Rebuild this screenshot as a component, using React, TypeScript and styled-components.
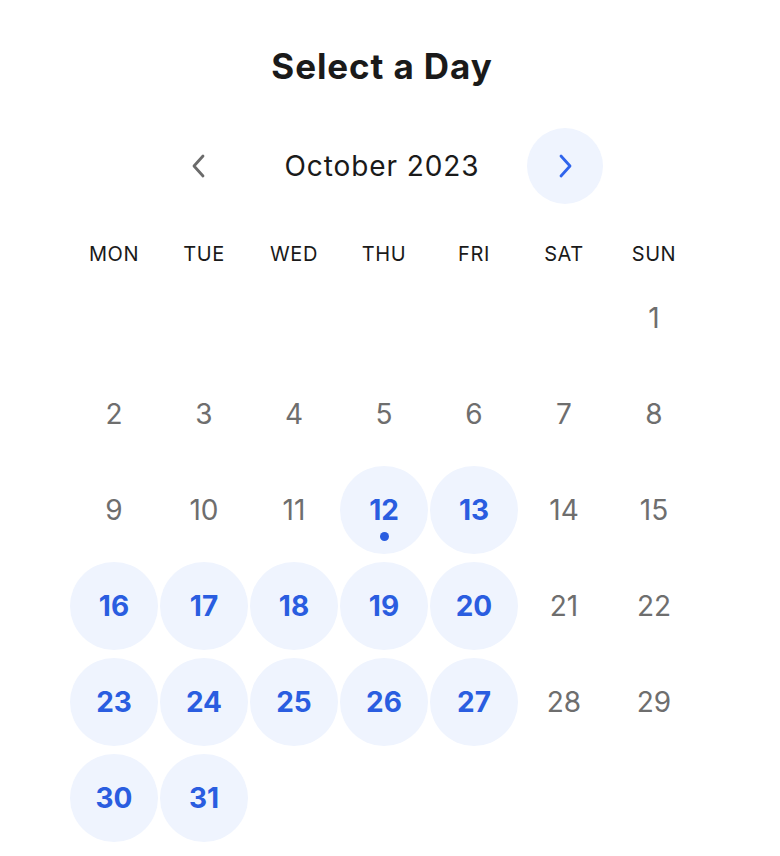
import React from 'react';
import styled, {createGlobalStyle} from "styled-components";

const GlobalStyle = createGlobalStyle`
  body {
    margin: 0;
    background: #fff;
    font-family: Inter, Lato, sans-serif;
  }
`

const weekDays = ['MON', 'TUE', 'WED', 'THU', 'FRI', 'SAT', 'SUN'];
const available = [12, 13, 16, 17, 18, 19, 20, 23, 24, 25, 26, 27, 30, 31];
const today = 12;
const offset = 6; // October 1st 2023 is a Sunday

export default function App() {
    const days = Array.from({length: 31}, (_, i) => i + 1);
    return (
        <>
            <GlobalStyle/>
            <Page>
                <Picker>
                    <Title>Select a Day</Title>
                    <Nav>
                        <NavButton aria-label="Previous month">
                            <Chevron color="#6b6b6b" d="M11 2 L2 12 L11 22"/>
                        </NavButton>
                        <Month>October 2023</Month>
                        <NavButton aria-label="Next month" active>
                            <Chevron color="#2f64ec" d="M3 2 L12 12 L3 22"/>
                        </NavButton>
                    </Nav>
                    <Grid>
                        {weekDays.map(d => <WeekDay key={d}>{d}</WeekDay>)}
                        {Array.from({length: offset}, (_, i) => <span key={'e' + i}/>)}
                        {days.map(d => {
                            const open = available.includes(d);
                            return (
                                <Day key={d} open={open}>
                                    {d}
                                    {d === today && <TodayDot/>}
                                </Day>
                            );
                        })}
                    </Grid>
                </Picker>
            </Page>
        </>
    );
}

const Chevron = ({d, color}: { d: string, color: string }) => (
    <svg width="14" height="24" viewBox="0 0 14 24" fill="none">
        <path d={d} stroke={color} strokeWidth="2.8" strokeLinecap="round" strokeLinejoin="round"/>
    </svg>
)

const Page = styled.div`
  display: flex;
  justify-content: center;
  padding-right: 12px;
`
const Picker = styled.div`
  width: 628px;
  display: flex;
  flex-direction: column;
  align-items: center;
`
const Title = styled.h1`
  margin: 46px 0 0;
  color: #1a1a1a;
  font-size: 35px;
  font-weight: 700;
  line-height: 40px;
  letter-spacing: 0.9px;
  margin-left: -4px;
`
const Nav = styled.div`
  margin-top: 42px;
  display: grid;
  grid-template-columns: 76px 290px 76px;
  align-items: center;
  margin-left: -4px;
`
const NavButton = styled.button<{ active?: boolean }>`
  width: 76px;
  height: 76px;
  border: none;
  border-radius: 50%;
  padding: 0;
  display: flex;
  align-items: center;
  justify-content: center;
  background: ${p => p.active ? '#eff4fe' : 'transparent'};
  cursor: pointer;
`
const Month = styled.div`
  text-align: center;
  color: #1a1a1a;
  font-size: 28px;
  line-height: 34px;
  letter-spacing: 0.9px;
`
const Grid = styled.div`
  margin-top: 38px;
  display: grid;
  grid-template-columns: repeat(7, 88px);
  grid-template-rows: 24px;
  grid-auto-rows: 88px;
  column-gap: 2px;
  row-gap: 8px;
`
const WeekDay = styled.div`
  text-align: center;
  color: #1a1a1a;
  font-size: 20px;
  line-height: 24px;
  letter-spacing: 0.6px;
`
const Day = styled.div<{ open: boolean }>`
  position: relative;
  display: flex;
  align-items: center;
  justify-content: center;
  border-radius: 50%;
  font-size: 28px;
  background: ${p => p.open ? '#eff4fe' : 'transparent'};
  color: ${p => p.open ? '#2a5de0' : '#6e6e6e'};
  font-weight: ${p => p.open ? 700 : 400};
`
const TodayDot = styled.span`
  position: absolute;
  bottom: 13px;
  left: 50%;
  width: 9px;
  height: 9px;
  margin-left: -4.5px;
  border-radius: 50%;
  background: #2a5de0;
`
